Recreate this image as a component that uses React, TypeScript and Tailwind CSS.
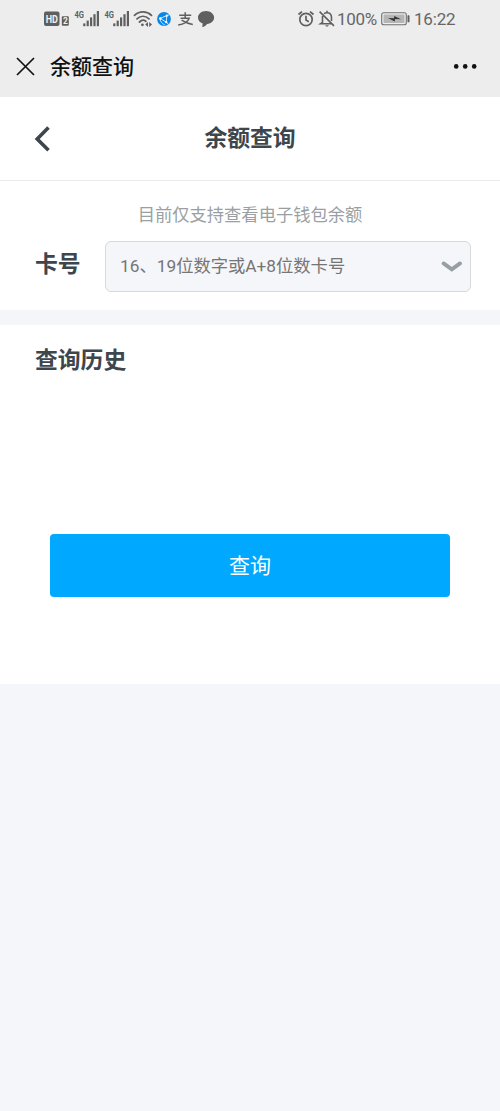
import type { ReactNode } from "react";

const textFont = "font-['Roboto','Noto_Sans_CJK_SC',sans-serif]";

function SignalIcon() {
  return (
    <svg width="26" height="18" viewBox="0 0 26 18" fill="#5f5f5f">
      <text x="0.5" y="8" fontSize="9.5" fontWeight="700" textLength="9.5" lengthAdjust="spacingAndGlyphs">
        4G
      </text>
      <rect x="9.2" y="13.4" width="2.2" height="2.8" />
      <rect x="12.6" y="10.6" width="2.2" height="5.6" />
      <rect x="16" y="7.4" width="2.2" height="8.8" />
      <rect x="19.4" y="4.2" width="2.2" height="12" />
      <rect x="22.8" y="1" width="2.2" height="15.2" />
    </svg>
  );
}

function HdIcon() {
  return (
    <svg width="26" height="16" viewBox="0 0 26 16">
      <rect x="0" y="0.5" width="15.5" height="14.5" rx="2" fill="#5f5f5f" />
      <text x="1.7" y="11.8" fontSize="11" fontWeight="700" textLength="12.2" lengthAdjust="spacingAndGlyphs" fill="#f0f0f0">
        HD
      </text>
      <rect x="17.8" y="5.3" width="7" height="9.4" rx="1" fill="#5f5f5f" />
      <text x="19" y="13" fontSize="8.4" fontWeight="700" fill="#f0f0f0">
        2
      </text>
    </svg>
  );
}

function WifiIcon() {
  return (
    <svg width="20" height="18" viewBox="0 0 20 18" fill="none" stroke="#5f5f5f" strokeWidth="1.8" strokeLinecap="round">
      <path d="M1.5 5.4C6.4.8 13.6.8 18.5 5.4" />
      <path d="M4 8.8C7.6 5.5 12.4 5.5 16 8.8" />
      <path d="M6.5 12C8.5 10 11 9.8 12.8 11.3" />
      <circle cx="9.4" cy="14.8" r="1.4" fill="#5f5f5f" stroke="none" />
      <path d="M15 12v5l-2.8-2.5zM16.2 12v5l2.8-2.5z" fill="#5f5f5f" stroke="none" />
    </svg>
  );
}

function BrowserIcon() {
  return (
    <svg width="16" height="16" viewBox="0 0 16 16">
      <circle cx="8" cy="8" r="6.9" fill="#0788e8" />
      <g fill="none" stroke="#e4f3ff" strokeWidth="0.9">
        <path d="M4.2 7.4 10.8 4.6 10.2 11.2Z" />
        <path d="M10.8 4.6 13.6 3.7M10.2 11.2 12.4 13M4.2 7.4C3.9 10.4 6.2 12.6 8.7 14" />
      </g>
      <circle cx="4.2" cy="7.4" r="1.2" fill="#fff" />
      <circle cx="10.8" cy="4.7" r="1.1" fill="#fff" />
      <circle cx="10.2" cy="11.2" r="1.1" fill="#fff" />
    </svg>
  );
}

function AlipayIcon() {
  return (
    <svg width="17" height="16" viewBox="0 0 17 16" fill="none" stroke="#5f5f5f" strokeWidth="1.5">
      <path d="M2.2 4.2H14.2M8.2 1.2V7.2M3.6 7.3H12.2C11 10.4 7 13.4 1.2 14" />
      <path d="M4.6 9.2C7.4 11 11 12.9 15.8 13.4" />
    </svg>
  );
}

function BubbleIcon() {
  return (
    <svg width="18" height="18" viewBox="0 0 18 18" fill="#5f5f5f">
      <path d="M9 1C4.4 1 1 3.9 1 7.6c0 2.8 1.7 5 4.7 5.9L5.2 17c2.1-.2 3.8-1.4 4.9-3 4.1-.3 7-3 7-6.4C17.1 3.9 13.6 1 9 1Z" />
    </svg>
  );
}

function AlarmIcon() {
  return (
    <svg width="18" height="18" viewBox="0 0 18 18" fill="none" stroke="#5f5f5f" strokeWidth="1.7">
      <circle cx="9" cy="9.5" r="6.2" />
      <path d="M9 5.8v4.2l2.8 1.7M1.5 4.5 5 1.6M16.5 4.5 13 1.6" />
    </svg>
  );
}

function BellOffIcon() {
  return (
    <svg width="18" height="18" viewBox="0 0 18 18" fill="none" stroke="#5f5f5f" strokeWidth="1.6">
      <path d="M1.6 1.6 16 15.9M6 3.7C6.8 2.9 7.8 2.7 9 2.7c2.8 0 4.5 2 4.5 4.8v3.4M4.5 6.1v6.2L2.3 13.8H13.8M9 .8v2" />
      <path d="M7.3 15.2h3.4c-.2.9-.8 1.4-1.7 1.4s-1.5-.5-1.7-1.4Z" fill="#5f5f5f" stroke="none" />
    </svg>
  );
}

function BatteryIcon() {
  return (
    <svg width="29" height="14" viewBox="0 0 29 14">
      <rect x=".7" y=".7" width="24.6" height="12" rx="2" fill="#eee" stroke="#707070" strokeWidth="1.1" />
      <rect x="2.5" y="2.5" width="21" height="8.4" rx=".5" fill="#b5b5b5" />
      <path d="m7 6.1 6.1.2.1-2.3 6.8 3.3-5.9-.2-.4 2.3Z" fill="#343434" />
      <rect x="26.5" y="3.3" width="2" height="7" rx=".6" fill="#5f5f5f" />
    </svg>
  );
}

function StatusBar() {
  return (
    <div className="flex h-9 items-center pt-px pl-11 text-[#666]">
      <HdIcon />
      <span className="ml-1"><SignalIcon /></span>
      <span className="ml-1"><SignalIcon /></span>
      <span className="ml-[3px]"><WifiIcon /></span>
      <span className="ml-[3px]"><BrowserIcon /></span>
      <span className="ml-[5px]"><AlipayIcon /></span>
      <span className="ml-[3px]"><BubbleIcon /></span>
      <span className="ml-[82px]"><AlarmIcon /></span>
      <span className="ml-[3px]"><BellOffIcon /></span>
      <span className="ml-[1px] w-[43px] pt-px text-[17px] leading-none tracking-[-0.3px]">100%</span>
      <span className="ml-px"><BatteryIcon /></span>
      <span className="ml-1 pt-px text-[17px] leading-none tracking-[-0.2px]">16:22</span>
    </div>
  );
}

function AppBar() {
  return (
    <div className="flex h-[60px] items-center pr-[22px] pl-4 text-[#111]">
      <svg width="19" height="19" viewBox="0 0 19 19" fill="none" stroke="currentColor" strokeWidth="1.7">
        <path d="m1 1 17 17M18 1 1 18" />
      </svg>
      <span className="ml-[15px] pt-[3px] text-[21px] leading-none font-medium">余额查询</span>
      <svg className="ml-auto" width="25" height="6" viewBox="0 0 25 6" fill="currentColor">
        <circle cx="3.2" cy="3.4" r="2.3" />
        <circle cx="12.2" cy="3.4" r="2.3" />
        <circle cx="21.2" cy="3.4" r="2.3" />
      </svg>
    </div>
  );
}

function SectionTitle({ children }: { children: ReactNode }) {
  return <h2 className="text-[22.8px] leading-8 font-bold text-[#3c464c]">{children}</h2>;
}

export default function App() {
  return (
    <div className={`min-h-[1111px] w-[500px] bg-[#f5f6fa] ${textFont}`}>
      <header className="h-[97px] bg-[#ededed]">
        <StatusBar />
        <AppBar />
      </header>

      {/* Page heading */}
      <div className="grid h-[84px] grid-cols-[1fr_auto_1fr] items-center border-b border-[#e9eaec] bg-white">
        <svg className="ml-[34px]" width="17" height="26" viewBox="0 0 17 26" fill="none" stroke="#3c464c" strokeWidth="3.6">
          <path d="M14.5 1.6 3.2 12.9 14.5 24.2" />
        </svg>
        <SectionTitle>余额查询</SectionTitle>
      </div>

      {/* Card number */}
      <section className="h-[129px] bg-white pt-[22px]">
        <p className="text-center text-[17.3px] leading-6 text-[#9a9fa3]">目前仅支持查看电子钱包余额</p>
        <div className="mt-[14px] flex h-[51px] items-center pr-[29px] pl-[35px]">
          <div className="w-[70px] pb-[3px]">
            <SectionTitle>卡号</SectionTitle>
          </div>
          <button className="flex h-full flex-1 items-center justify-between rounded-md border border-[#d8d9dd] bg-[#f5f6fa] pr-[7px] pl-[14px] text-[17.3px] text-[#757575]">
            <span>16、19位数字或A+8位数卡号</span>
            <svg width="22" height="13" viewBox="0 0 22 13" fill="none" stroke="#979fa3" strokeWidth="3.8" strokeLinecap="round">
              <path d="m2.6 3.4 8.2 6 8.2-6" />
            </svg>
          </button>
        </div>
      </section>

      {/* Query history */}
      <section className="mt-[15px] h-[359px] bg-white px-[35px] pt-5">
        <SectionTitle>查询历史</SectionTitle>
        <button className="mx-[15px] mt-[157px] h-[63px] w-[400px] rounded bg-[#00a9ff] pt-[2px] text-[21px] text-white">
          查询
        </button>
      </section>
    </div>
  );
}
